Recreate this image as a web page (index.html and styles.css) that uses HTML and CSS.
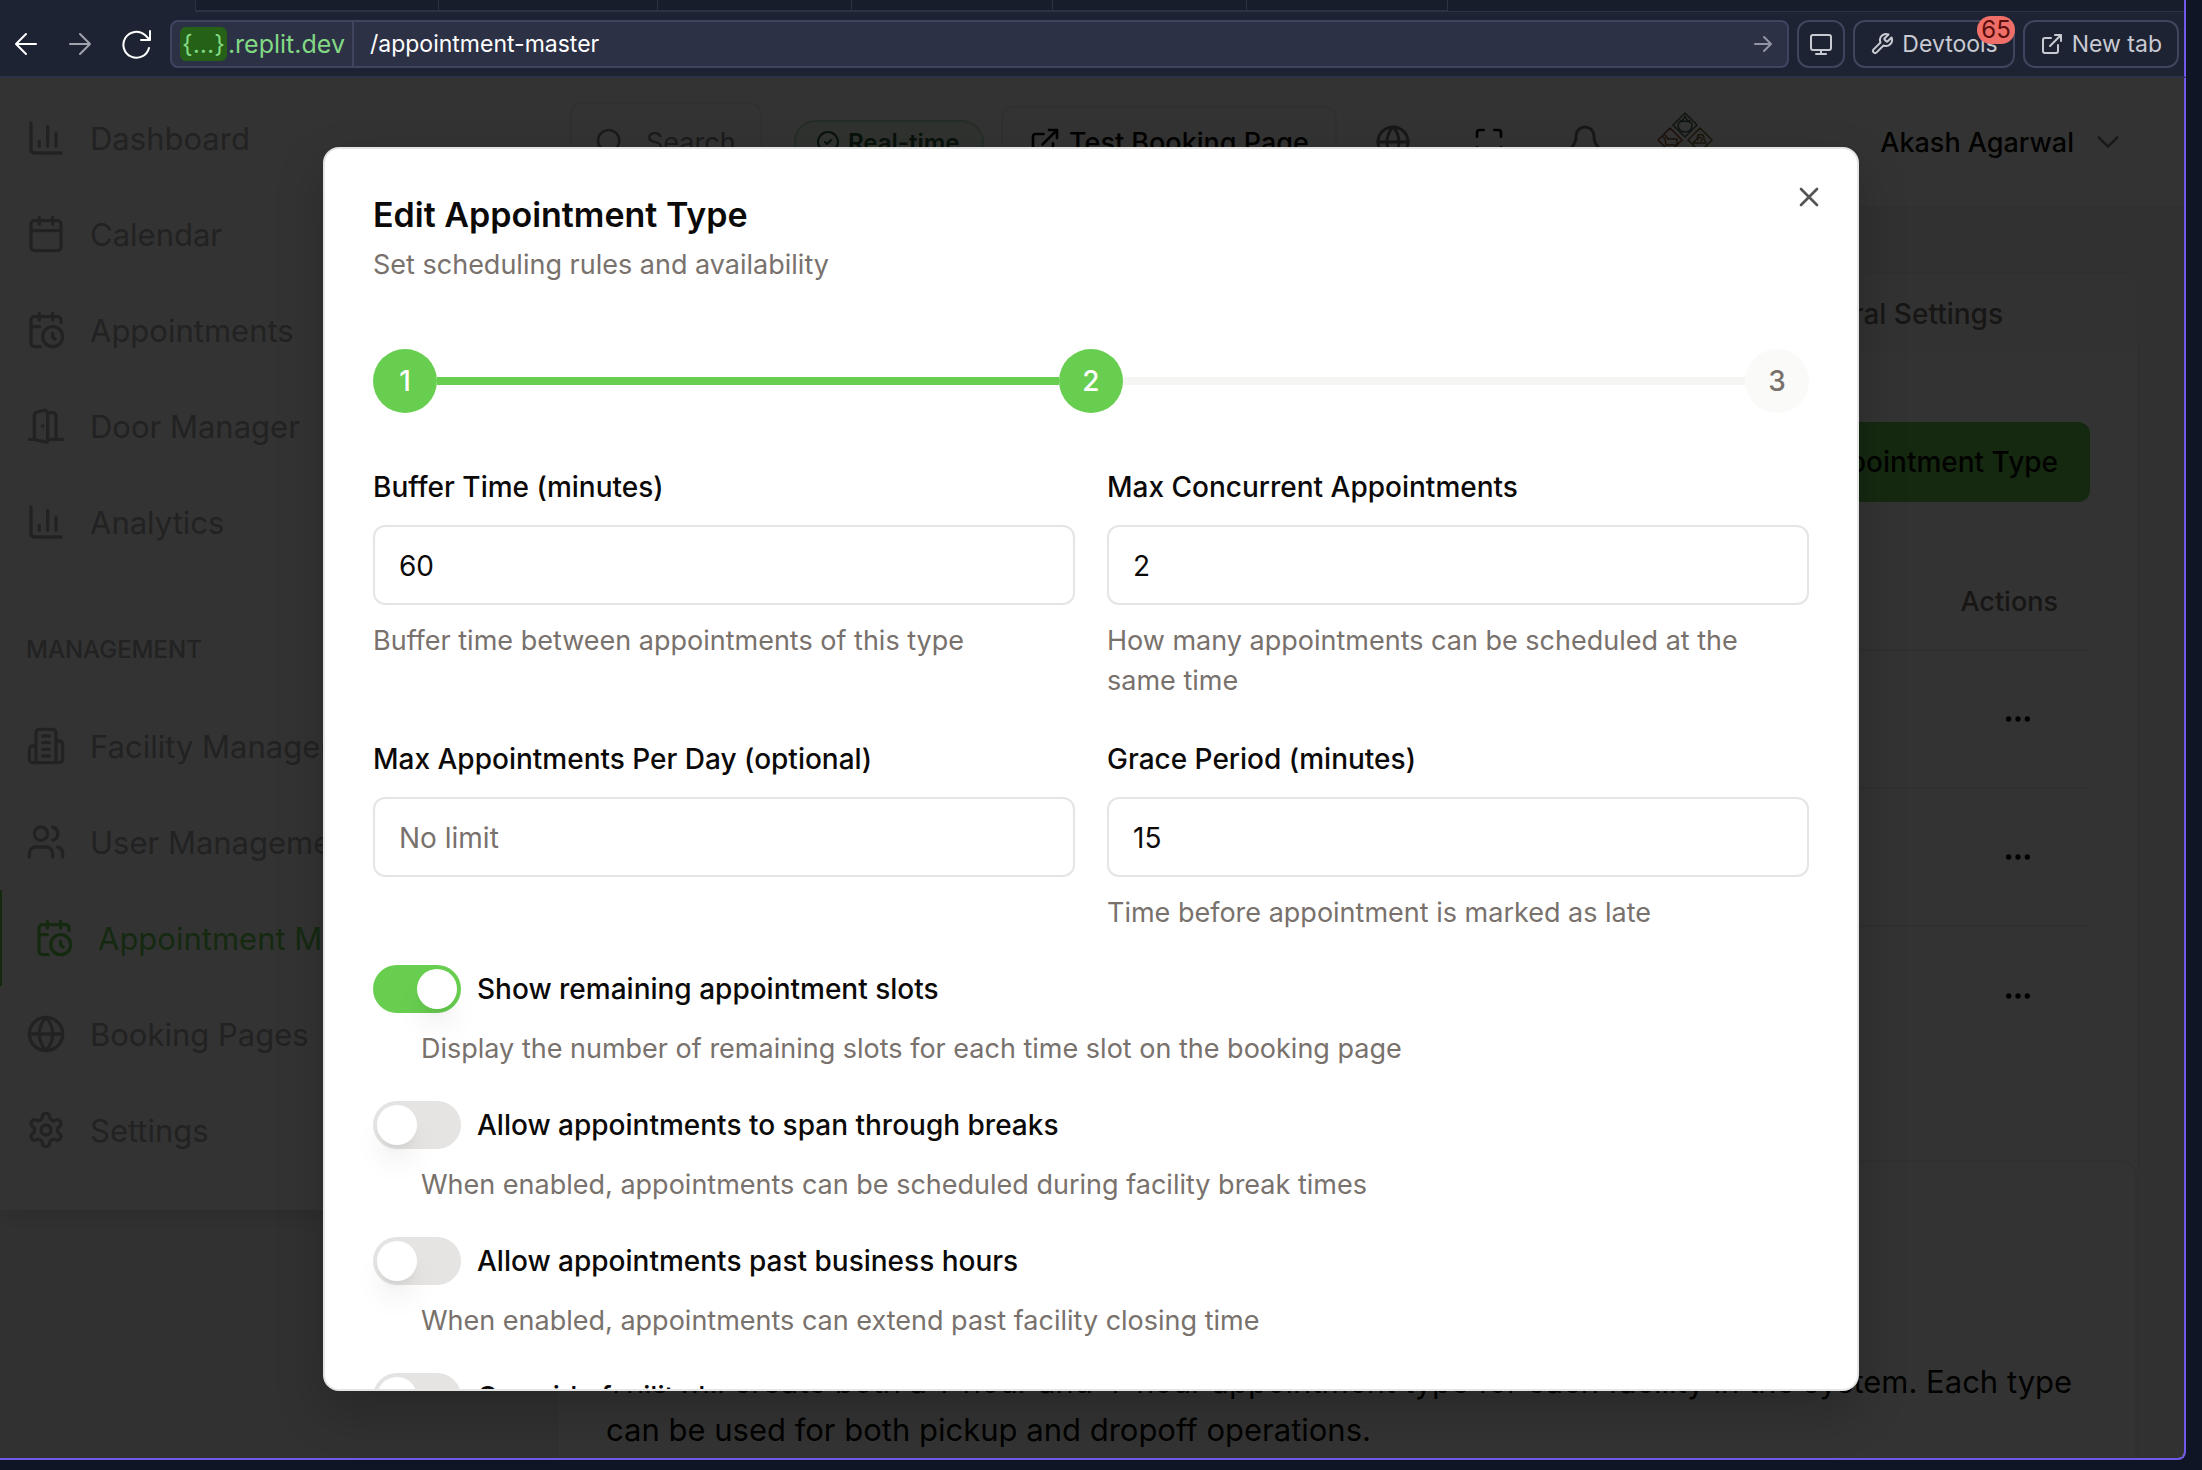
FILE: index.html
```html
<!DOCTYPE html>
<html lang="en">
<head>
<meta charset="utf-8">
<meta name="viewport" content="width=device-width, initial-scale=1">
<title>Appointment Master</title>
<link rel="stylesheet" href="styles.css">
</head>
<body>
<svg class="sprite" aria-hidden="true">
  <symbol id="chart" viewBox="0 0 24 24"><path d="M3 3v16a2 2 0 0 0 2 2h16M8 17v-3M13 17V5M18 17V9"/></symbol>
  <symbol id="calendar" viewBox="0 0 24 24"><path d="M8 2v4M16 2v4M3 10h18"/><rect x="3" y="4" width="18" height="18" rx="2"/></symbol>
  <symbol id="calendar-clock" viewBox="0 0 24 24"><path d="M21 7.5V6a2 2 0 0 0-2-2H5a2 2 0 0 0-2 2v14a2 2 0 0 0 2 2h3.500M16 2v4M8 2v4M3 10h5M17.500 17.500 16 16.300V14"/><circle cx="16" cy="16" r="6"/></symbol>
  <symbol id="door" viewBox="0 0 24 24"><path d="M13 4h3a2 2 0 0 1 2 2v14M2 20h3M13 20h9M10 12v.01M13 4.562v16.157a1 1 0 0 1-1.242.970L5 20V5.562a2 2 0 0 1 1.515-1.940l4-1A2 2 0 0 1 13 4.561Z"/></symbol>
  <symbol id="building" viewBox="0 0 24 24"><path d="M6 22V4a2 2 0 0 1 2-2h8a2 2 0 0 1 2 2v18ZM6 12H4a2 2 0 0 0-2 2v6a2 2 0 0 0 2 2h2M18 9h2a2 2 0 0 1 2 2v9a2 2 0 0 1-2 2h-2M10 6h4M10 10h4M10 14h4M10 18h4"/></symbol>
  <symbol id="users" viewBox="0 0 24 24"><path d="M16 21v-2a4 4 0 0 0-4-4H6a4 4 0 0 0-4 4v2M22 21v-2a4 4 0 0 0-3-3.870M16 3.130a4 4 0 0 1 0 7.750"/><circle cx="9" cy="7" r="4"/></symbol>
  <symbol id="globe" viewBox="0 0 24 24"><circle cx="12" cy="12" r="10"/><path d="M12 2a14.500 14.500 0 0 0 0 20 14.500 14.500 0 0 0 0-20M2 12h20"/></symbol>
  <symbol id="gear" viewBox="0 0 24 24"><path d="M12.220 2h-.44a2 2 0 0 0-2 2v.18a2 2 0 0 1-1 1.730l-.43.25a2 2 0 0 1-2 0l-.15-.08a2 2 0 0 0-2.730.73l-.22.38a2 2 0 0 0 .73 2.730l.15.1a2 2 0 0 1 1 1.720v.51a2 2 0 0 1-1 1.740l-.15.09a2 2 0 0 0-.73 2.730l.22.38a2 2 0 0 0 2.730.73l.15-.08a2 2 0 0 1 2 0l.43.25a2 2 0 0 1 1 1.730V20a2 2 0 0 0 2 2h.44a2 2 0 0 0 2-2v-.18a2 2 0 0 1 1-1.730l.43-.25a2 2 0 0 1 2 0l.15.08a2 2 0 0 0 2.730-.73l.22-.39a2 2 0 0 0-.73-2.730l-.15-.08a2 2 0 0 1-1-1.740v-.5a2 2 0 0 1 1-1.740l.15-.09a2 2 0 0 0 .73-2.730l-.22-.38a2 2 0 0 0-2.730-.73l-.15.08a2 2 0 0 1-2 0l-.43-.25a2 2 0 0 1-1-1.730V4a2 2 0 0 0-2-2z"/><circle cx="12" cy="12" r="3"/></symbol>
  <symbol id="external" viewBox="0 0 24 24"><path d="M15 3h6v6M10 14 21 3M18 13v6a2 2 0 0 1-2 2H5a2 2 0 0 1-2-2V8a2 2 0 0 1 2-2h6"/></symbol>
  <symbol id="dots" viewBox="0 0 24 24"><circle cx="12" cy="12" r="1"/><circle cx="19" cy="12" r="1"/><circle cx="5" cy="12" r="1"/></symbol>
</svg>

<div class="window">
  <div class="tabs"><span></span><span></span><span></span><span></span><span></span><span></span></div>
  <nav class="toolbar" aria-label="Browser">
    <button class="nav-btn" aria-label="Back"><svg class="i24" viewBox="0 0 24 24"><path d="M22 12H2M12 2 2 12l10 10"/></svg></button>
    <button class="nav-btn dim" aria-label="Forward"><svg class="i24" viewBox="0 0 24 24"><path d="M2 12h20M12 2l10 10-10 10"/></svg></button>
    <button class="nav-btn" aria-label="Reload"><svg class="i32" viewBox="0 0 32 32"><path d="M29 20A13 13 0 1 1 25 7l5 5M30 3v9h-9"/></svg></button>
    <div class="url">
      <span class="host"><b>{...}</b>.replit.dev</span>
      <input class="path" type="text" value="/appointment-master" aria-label="Path">
      <svg class="i20 go" viewBox="0 0 20 20"><path d="M2 10h16M11 3l7 7-7 7"/></svg>
    </div>
    <button class="tool" aria-label="Screen size"><svg class="i24" viewBox="0 0 24 24"><rect x="2" y="3" width="20" height="15" rx="2"/><path d="M7 22h10M12 18v4"/></svg></button>
    <button class="tool"><svg class="i24" viewBox="0 0 24 24"><path d="M14.700 6.300a1 1 0 0 0 0 1.400l1.600 1.600a1 1 0 0 0 1.400 0l3.770-3.770a6 6 0 0 1-7.940 7.940l-6.910 6.910a2.120 2.120 0 0 1-3-3l6.910-6.910a6 6 0 0 1 7.940-7.940l-3.760 3.760z"/></svg>Devtools<span class="count">65</span></button>
    <button class="tool"><svg class="i24"><use href="#external"/></svg>New tab</button>
  </nav>

  <div class="page">
    <aside class="sidebar">
      <a href="#"><svg class="i40"><use href="#chart"/></svg>Dashboard</a>
      <a href="#"><svg class="i40"><use href="#calendar"/></svg>Calendar</a>
      <a href="#"><svg class="i40"><use href="#calendar-clock"/></svg>Appointments</a>
      <a href="#"><svg class="i40"><use href="#door"/></svg>Door Manager</a>
      <a href="#"><svg class="i40"><use href="#chart"/></svg>Analytics</a>
      <h2>MANAGEMENT</h2>
      <a href="#"><svg class="i40"><use href="#building"/></svg>Facility Management</a>
      <a href="#"><svg class="i40"><use href="#users"/></svg>User Management</a>
      <a href="#" class="active"><svg class="i40"><use href="#calendar-clock"/></svg>Appointment Master</a>
      <a href="#"><svg class="i40"><use href="#globe"/></svg>Booking Pages</a>
      <a href="#"><svg class="i40"><use href="#gear"/></svg>Settings</a>
    </aside>

    <div class="content">
      <header class="header">
        <button class="search"><svg class="i32" viewBox="0 0 24 24"><circle cx="11" cy="11" r="8"/><path d="m21 21-4.300-4.300"/></svg>Search</button>
        <span class="live"><svg class="i24" viewBox="0 0 24 24"><circle cx="12" cy="12" r="10"/><path d="m9 12 2 2 4-4"/></svg>Real-time</span>
        <button class="test"><svg class="i32"><use href="#external"/></svg>Test Booking Page</button>
        <div class="quick">
          <button aria-label="Language"><svg class="i36 grey"><use href="#globe"/></svg></button>
          <button aria-label="Fullscreen"><svg class="i32" viewBox="0 0 24 24"><path d="M8 3H5a2 2 0 0 0-2 2v3M21 8V5a2 2 0 0 0-2-2h-3M3 16v3a2 2 0 0 0 2 2h3M16 21h3a2 2 0 0 0 2-2v-3"/></svg></button>
          <button aria-label="Notifications"><svg class="i36 grey" viewBox="0 0 24 24"><path d="M10.268 21a2 2 0 0 0 3.464 0M3.262 15.326A1 1 0 0 0 4 17h16a1 1 0 0 0 .740-1.673C19.410 13.956 18 12.499 18 8A6 6 0 0 0 6 8c0 4.499-1.411 5.956-2.738 7.326"/></svg></button>
        </div>
        <svg class="logo" viewBox="0 0 56 60">
          <g fill="none" stroke-width="1.500"><path stroke="#4d6a50" d="M28 1 40 13 28 25 16 13z"/><path stroke="#4d6a50" d="M21 13c0-5 14-5 14 0s-3 7-7 7-7-3-7-7zM23 9l3-1 2-4 2 4 3 1"/><path stroke="#8a5435" d="M13 16 25 28 13 40 1 28zM8 23l3 4h9v6H9l-1-6-2-2"/><path stroke="#85692f" d="M43 16 55 28 43 40 31 28zM36 31h13l-2-4c0-6-7-6-7 0zM41 28a2 2 0 1 1 3 1"/></g>
        </svg>
        <button class="user">Akash Agarwal<svg class="i28 grey" viewBox="0 0 24 24"><path d="m4 8 8 8 8-8"/></svg></button>
      </header>

      <main class="main">
        <div class="tabstrip"><a href="#">General Settings</a></div>
        <section class="types">
          <button class="add">New Appointment Type</button>
          <table>
            <thead><tr><th scope="col">Actions</th></tr></thead>
            <tbody>
              <tr><td><button aria-label="Row actions"><svg class="i32"><use href="#dots"/></svg></button></td></tr>
              <tr><td><button aria-label="Row actions"><svg class="i32"><use href="#dots"/></svg></button></td></tr>
              <tr><td><button aria-label="Row actions"><svg class="i32"><use href="#dots"/></svg></button></td></tr>
            </tbody>
          </table>
        </section>
        <section class="note"><p>This will create both a 1-hour and 4-hour appointment type for each facility in the system. Each type can be used for both pickup and dropoff operations.</p></section>
      </main>
    </div>

    <div class="overlay">
      <div class="dialog" role="dialog" aria-modal="true" aria-labelledby="dialog-title">
        <button class="close" aria-label="Close"><svg class="i32" viewBox="0 0 24 24"><path d="M18 6 6 18M6 6l12 12"/></svg></button>
        <h1 id="dialog-title">Edit Appointment Type</h1>
        <p class="sub">Set scheduling rules and availability</p>
        <div class="steps"><span class="step on">1</span><i class="on"></i><span class="step on">2</span><i></i><span class="step">3</span></div>
        <form>
          <div class="fields">
            <div class="field"><label for="buffer">Buffer Time (minutes)</label><input id="buffer" type="text" value="60"><p>Buffer time between appointments of this type</p></div>
            <div class="field"><label for="concurrent">Max Concurrent Appointments</label><input id="concurrent" type="text" value="2"><p>How many appointments can be scheduled at the same time</p></div>
            <div class="field"><label for="perday">Max Appointments Per Day (optional)</label><input id="perday" type="text" placeholder="No limit"></div>
            <div class="field"><label for="grace">Grace Period (minutes)</label><input id="grace" type="text" value="15"><p>Time before appointment is marked as late</p></div>
          </div>
          <div class="option"><div class="row"><input id="slots" type="checkbox" role="switch" checked><label for="slots">Show remaining appointment slots</label></div><p>Display the number of remaining slots for each time slot on the booking page</p></div>
          <div class="option"><div class="row"><input id="breaks" type="checkbox" role="switch"><label for="breaks">Allow appointments to span through breaks</label></div><p>When enabled, appointments can be scheduled during facility break times</p></div>
          <div class="option"><div class="row"><input id="past" type="checkbox" role="switch"><label for="past">Allow appointments past business hours</label></div><p>When enabled, appointments can extend past facility closing time</p></div>
          <div class="option"><div class="row"><input id="override" type="checkbox" role="switch"><label for="override">Override facility hours</label></div></div>
        </form>
      </div>
    </div>
  </div>
</div>
</body>
</html>
```
FILE: styles.css
```css
* { box-sizing: border-box; margin: 0; padding: 0; }
body { background: #0f1524; font-family: Inter, "Liberation Sans", sans-serif; font-size: 28px; color: #0c0a09; }
button, input { font: inherit; color: inherit; background: none; border: 0; }
a { color: inherit; text-decoration: none; }
svg { fill: none; stroke: currentColor; stroke-width: 2; stroke-linecap: round; stroke-linejoin: round; flex: none; }
.sprite { position: absolute; width: 0; height: 0; }
.i20 { width: 20px; height: 20px; }
.i24 { width: 24px; height: 24px; }
.i28 { width: 28px; height: 28px; }
.i32 { width: 32px; height: 32px; }
.i36 { width: 36px; height: 36px; }
.i40 { width: 40px; height: 40px; }
.grey { color: #777; }

.window { display: flex; flex-direction: column; height: 100vh; padding: 0 16px 10px 0; }

/* browser chrome */
.tabs { display: flex; height: 12px; padding-left: 195px; background: linear-gradient(90deg, #1e2333 195px, #171d2b 195px); border-right: 2px solid #7059e8; }
.tabs span { flex: 0 1 auto; width: 201px; border-left: 1px solid #2c3146; border-bottom: 2px solid #2c3146; }
.tabs span:first-child { width: 243px; }
.tabs span:nth-child(2) { width: 219px; }
.tabs span:nth-child(3), .tabs span:nth-child(5) { width: 194px; }
.tabs::after { content: ""; flex: 1; border-left: 1px solid #2c3146; border-bottom: 1px solid #2c3146; }
.toolbar { display: flex; align-items: center; height: 66px; padding-right: 5px; background: #1e2333; border-bottom: 2px solid #2c3146; border-right: 2px solid #7059e8; color: #c8cad2; font-size: 23px; }
.nav-btn { display: flex; justify-content: center; width: 56px; color: #fff; }
.nav-btn:first-child { width: 52px; }
.nav-btn:nth-child(3) { margin-right: 6px; }
.nav-btn.dim { color: #a0a3ad; }
.url { display: flex; flex: 1; align-items: center; height: 48px; margin-right: 8px; padding-right: 14px; background: #2d3145; border: 2px solid #40455f; border-radius: 8px; }
.host { display: flex; align-items: center; width: 182px; height: 44px; padding-left: 8px; border-right: 2px solid #40455f; color: #82d983; font-size: 25px; }
.host b { padding: 0 2px; margin-right: 1px; background: #256117; border-radius: 6px; font-weight: 400; line-height: 34px; }
.path { flex: 1; min-width: 0; padding-left: 16px; color: #fff; outline: 0; }
.go { color: #9094a3; }
.tool { position: relative; display: flex; align-items: center; gap: 8px; height: 48px; margin-right: 8px; padding: 0 15px; border: 2px solid #40455f; border-radius: 12px; }
.tool:nth-child(5) { padding: 0 10px; }
.tool:last-child { margin-right: 0; }
.count { position: absolute; top: -6px; right: -2px; padding: 0 4px; background: #ef6f68; border-radius: 14px; color: #5c0f0c; font-size: 24px; line-height: 28px; }

/* application */
.page { position: relative; display: flex; flex: 1; align-items: flex-start; min-height: 0; overflow: hidden; background: #f5f5f4; border: solid #7059e8; border-width: 0 2px 2px 0; border-bottom-right-radius: 8px; }
.sidebar { width: 508px; padding: 12px 0 32px; background: #fff; border-right: 2px solid #fafafa; box-shadow: 0 8px 20px rgba(0, 0, 0, .1); color: #a9a9a9; }
.sidebar a { display: flex; align-items: center; gap: 24px; height: 96px; padding-left: 26px; font-size: 31px; white-space: nowrap; }
.sidebar .active { padding-left: 32px; border-left: 2px solid #68ce50; color: #68ce50; }
.sidebar h2 { margin: 64px 0 32px; padding-left: 26px; font-size: 24px; font-weight: 500; line-height: 32px; }
.content { flex: 1; min-width: 0; }
.header { display: flex; align-items: center; height: 130px; padding: 0 62px; background: #fff; border-bottom: 2px solid #eeeeec; font-size: 27px; }
.search { display: flex; align-items: center; gap: 20px; width: 192px; height: 80px; margin-right: 32px; padding-left: 22px; border: 2px solid #eee; border-radius: 12px; color: #888; }
.live { display: flex; align-items: center; gap: 8px; width: 190px; height: 44px; margin-right: 17px; padding-left: 20px; border: 2px solid #b4e0bf; border-radius: 22px; background: #eefaf0; color: #2c5a38; font-size: 24px; font-weight: 600; }
.test { display: flex; align-items: center; gap: 8px; width: 336px; height: 72px; padding-left: 26px; border: 2px solid #eee; border-radius: 12px; font-weight: 500; white-space: nowrap; }
.quick { display: flex; align-items: center; margin-left: 8px; }
.quick button { display: flex; justify-content: center; width: 96px; }
.logo { width: 56px; height: 60px; margin: 0 auto 0 24px; }
.user { display: flex; align-items: center; gap: 20px; font-weight: 500; }
.main { margin: 64px 45px 0 48px; border: 2px solid #eee; border-radius: 16px; background: #fff; }
.tabstrip { display: flex; justify-content: flex-end; height: 80px; padding-right: 134px; border-radius: 14px; background: #fafaf9; color: #78716c; font-weight: 500; line-height: 80px; }
.types { padding: 68px 47px 96px; }
.add { display: block; height: 80px; margin: 0 0 52px auto; padding: 0 32px; background: #68ce50; border-radius: 12px; font-weight: 500; }
table { width: 100%; border-collapse: collapse; }
th { height: 96px; padding-right: 32px; color: #78716c; font-size: 27px; font-weight: 500; text-align: right; }
td { height: 138px; padding-right: 32px; text-align: right; }
tbody tr { border-top: 2px solid #eee; }
td button { display: inline-flex; align-items: center; justify-content: center; width: 80px; height: 80px; vertical-align: middle; }
td svg { fill: currentColor; }
.note { padding: 196px 48px 48px; border: solid #eee; border-width: 2px 2px 0 0; border-radius: 16px; font-size: 31px; line-height: 48px; }

/* dialog */
.overlay { position: absolute; inset: 0; display: flex; justify-content: center; padding: 69px 2px 67px 0; background: rgba(0, 0, 0, .8); }
.dialog { position: relative; width: 1536px; max-width: 90%; padding: 48px; overflow: hidden; background: #fff; border: 2px solid #e5e5e5; border-radius: 16px; box-shadow: 0 20px 50px rgba(0, 0, 0, .2); }
.close { position: absolute; top: 32px; right: 32px; display: flex; color: #555; }
h1 { font-size: 34px; font-weight: 600; line-height: 36px; }
.dialog p { color: #78716c; font-size: 27px; line-height: 40px; }
.dialog .sub { margin-top: 12px; }
.steps { display: flex; align-items: center; margin: 64px 0 60px; }
.step { width: 64px; height: 64px; border-radius: 50%; background: #fafaf9; color: #78716c; font-weight: 500; line-height: 64px; text-align: center; }
.steps i { flex: 1; height: 8px; background: #f5f5f4; }
.steps .on { background: #68ce50; color: #fff; }
.fields { display: grid; grid-template-columns: 1fr 1fr; gap: 44px 32px; }
.dialog label { font-weight: 500; line-height: 28px; }
.field label { display: block; margin-bottom: 24px; }
.field input { display: block; width: 100%; height: 80px; padding: 2px 24px 0; border: 2px solid #e5e5e5; border-radius: 12px; }
.field input::placeholder { color: #78716c; opacity: 1; }
.field p { margin-top: 16px; }
.option { margin-top: 32px; }
.row { display: flex; align-items: center; gap: 16px; }
.row input { appearance: none; width: 88px; height: 48px; padding: 4px; border-radius: 24px; background: #e5e4e2; }
.row input::before { content: ""; display: block; width: 40px; height: 40px; border-radius: 50%; background: #fff; box-shadow: 0 20px 30px -6px rgba(0, 0, 0, .1), 0 8px 12px -8px rgba(0, 0, 0, .1); }
.row input:checked { padding-left: 44px; background: #68ce50; }
.option p { margin-top: 16px; padding-left: 48px; }
```
